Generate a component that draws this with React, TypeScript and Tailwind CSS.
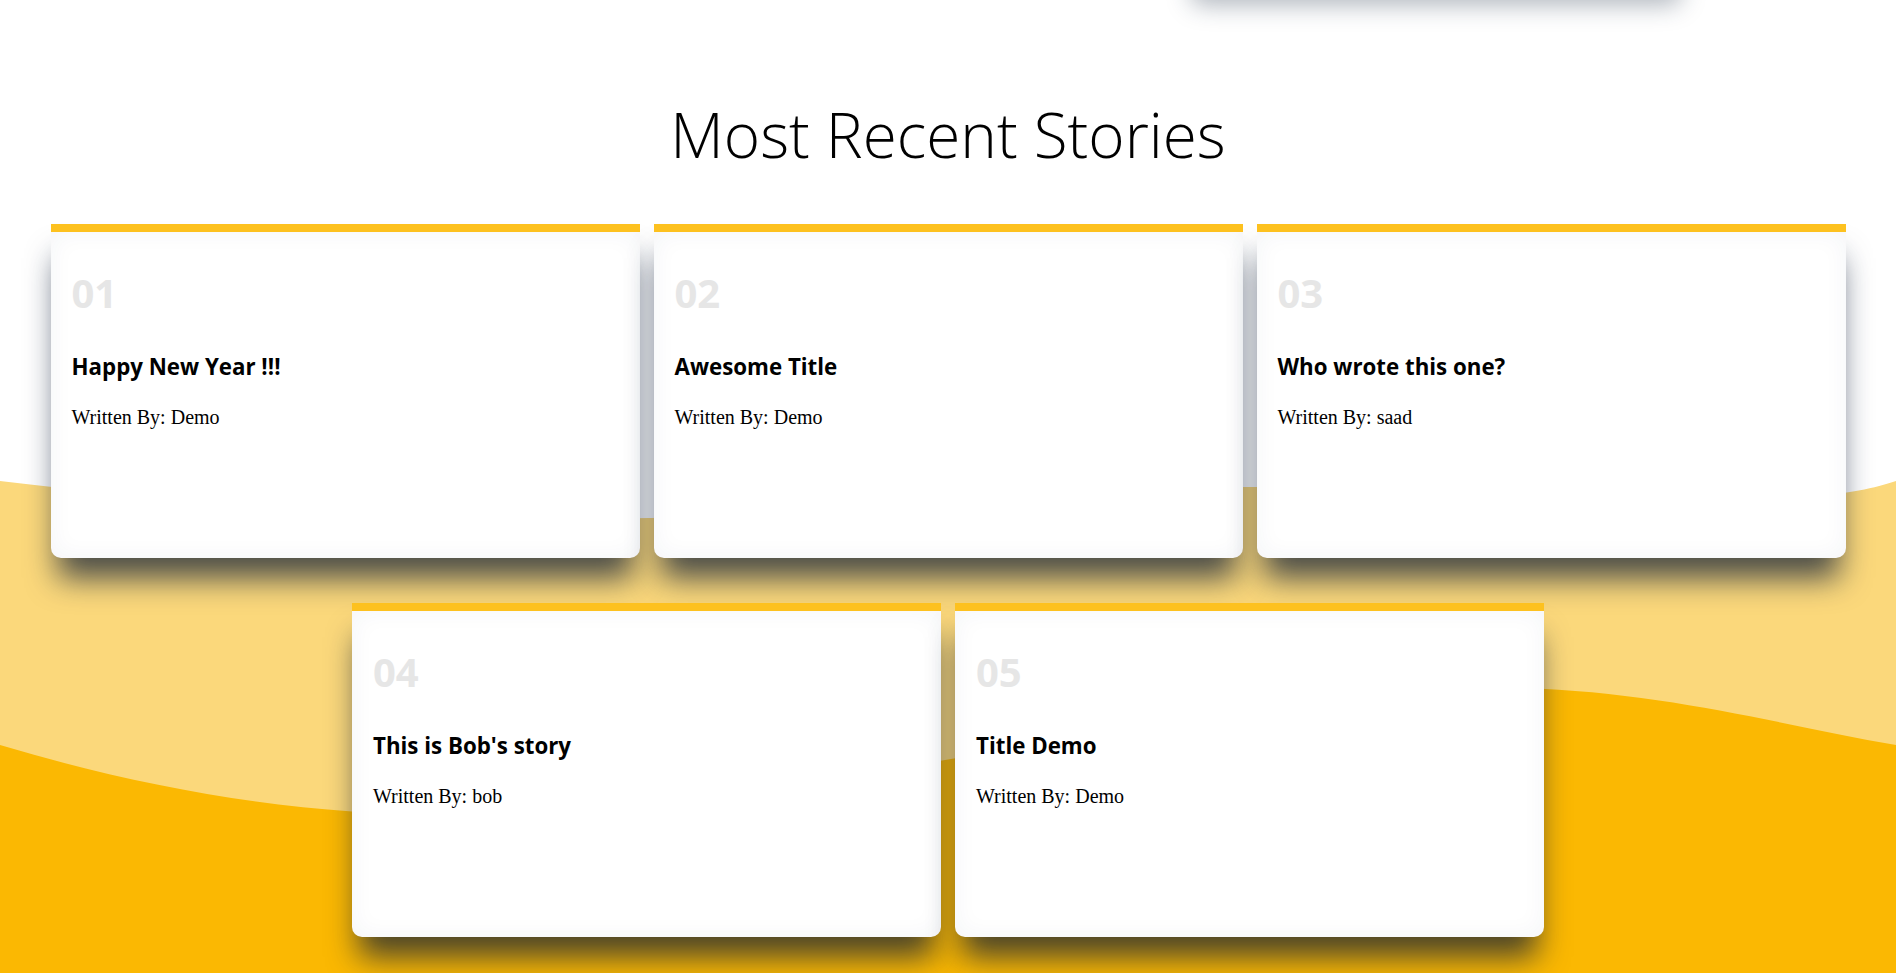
import React from "react";

const stories = [
  { n: "01", title: "Happy New Year !!!", author: "Demo" },
  { n: "02", title: "Awesome Title", author: "Demo" },
  { n: "03", title: "Who wrote this one?", author: "saad" },
  { n: "04", title: "This is Bob's story", author: "bob" },
  { n: "05", title: "Title Demo", author: "Demo" },
];

function Waves() {
  return (
    <svg
      className="absolute left-0 top-0 z-0"
      width="1896"
      height="973"
      viewBox="0 0 1896 973"
      preserveAspectRatio="none"
    >
      <path
        d="M0,481 C200,505 450,520 650,518 C900,515 1050,485 1250,487 C1450,489 1650,505 1800,497 C1850,494 1875,488 1896,481 L1896,973 L0,973 Z"
        fill="#fbd87b"
      />
      <path
        d="M0,745 C150,790 300,815 450,815 C800,815 1200,688 1500,688 C1650,688 1780,725 1896,745 L1896,973 L0,973 Z"
        fill="#fbb802"
      />
    </svg>
  );
}

function Card({ n, title, author }: { n: string; title: string; author: string }) {
  return (
    <div className="w-[589px] h-[334px] bg-white border-t-8 border-[#fdc11f] rounded-b-[10px] shadow-[0_27px_31px_-7px_rgba(15,30,55,0.75),inset_0_0_24px_rgba(40,60,90,0.05)] px-[21px] pt-[41px]">
      <div className="font-['Open_Sans',sans-serif] font-bold text-[40px] leading-[40px] text-[#e6e6e6]">
        {n}
      </div>
      <h3 className="mt-[40px] font-['Open_Sans',sans-serif] font-bold text-[22.3px] leading-[28px] text-black">
        {title}
      </h3>
      <p className="mt-[25px] font-['Liberation_Serif',serif] text-[20px] leading-[22px] text-black">
        Written By: {author}
      </p>
    </div>
  );
}

export default function App() {
  return (
    <div className="relative w-full h-[973px] overflow-hidden bg-white">
      <Waves />
      <div className="relative z-10 flex flex-col">
        <div className="flex h-0">
          <div className="mt-[-50px] ml-[1191px] w-[490px] h-[45px] bg-white rounded-b-[10px] shadow-[0_10px_25px_rgba(30,45,70,0.35)]" />
        </div>
        <h1 className="mt-[90px] text-center font-['Open_Sans',sans-serif] font-light text-[62px] leading-[88px] text-black">
          Most Recent Stories
        </h1>
        <div className="mt-[46px] flex flex-wrap justify-center gap-x-[14px] gap-y-[45px]">
          {stories.map((s) => (
            <Card key={s.n} {...s} />
          ))}
        </div>
      </div>
    </div>
  );
}
